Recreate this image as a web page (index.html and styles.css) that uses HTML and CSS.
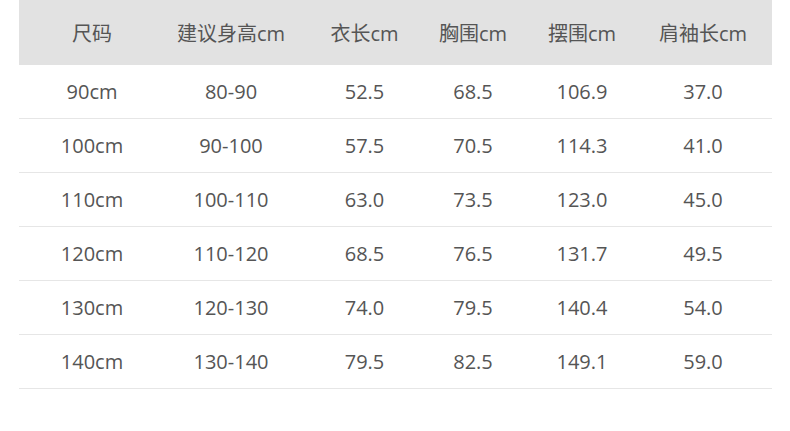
FILE: index.html
```html
<!DOCTYPE html>
<html lang="zh">
<head>
<meta charset="utf-8">
<link rel="stylesheet" href="styles.css">
</head>
<body>
<div class="table">
  <div class="row head">
    <div class="cell">尺码</div><div class="cell">建议身高cm</div><div class="cell">衣长cm</div><div class="cell">胸围cm</div><div class="cell">摆围cm</div><div class="cell">肩袖长cm</div>
  </div>
  <div class="row"><div class="cell">90cm</div><div class="cell">80-90</div><div class="cell">52.5</div><div class="cell">68.5</div><div class="cell">106.9</div><div class="cell">37.0</div></div>
  <div class="row"><div class="cell">100cm</div><div class="cell">90-100</div><div class="cell">57.5</div><div class="cell">70.5</div><div class="cell">114.3</div><div class="cell">41.0</div></div>
  <div class="row"><div class="cell">110cm</div><div class="cell">100-110</div><div class="cell">63.0</div><div class="cell">73.5</div><div class="cell">123.0</div><div class="cell">45.0</div></div>
  <div class="row"><div class="cell">120cm</div><div class="cell">110-120</div><div class="cell">68.5</div><div class="cell">76.5</div><div class="cell">131.7</div><div class="cell">49.5</div></div>
  <div class="row"><div class="cell">130cm</div><div class="cell">120-130</div><div class="cell">74.0</div><div class="cell">79.5</div><div class="cell">140.4</div><div class="cell">54.0</div></div>
  <div class="row"><div class="cell">140cm</div><div class="cell">130-140</div><div class="cell">79.5</div><div class="cell">82.5</div><div class="cell">149.1</div><div class="cell">59.0</div></div>
</div>
</body>
</html>
```
FILE: styles.css
```css
html, body {
  margin: 0;
  padding: 0;
  background: #ffffff;
}
body {
  font-family: "Open Sans", "Noto Sans CJK SC", sans-serif;
  color: #555555;
  font-size: 20px;
}
.table {
  margin-left: 19px;
  width: 753px;
}
.row {
  display: grid;
  grid-template-columns: 146px 132px 135px 82px 136px 1fr;
  height: 53px;
  border-bottom: 1px solid #e6e6e6;
  align-items: center;
}
.row.head {
  height: 65px;
  background: #e2e2e2;
  border-bottom: none;
}
.cell {
  text-align: center;
  white-space: nowrap;
}
.cell:last-child {
  padding-right: 16px;
}
```
